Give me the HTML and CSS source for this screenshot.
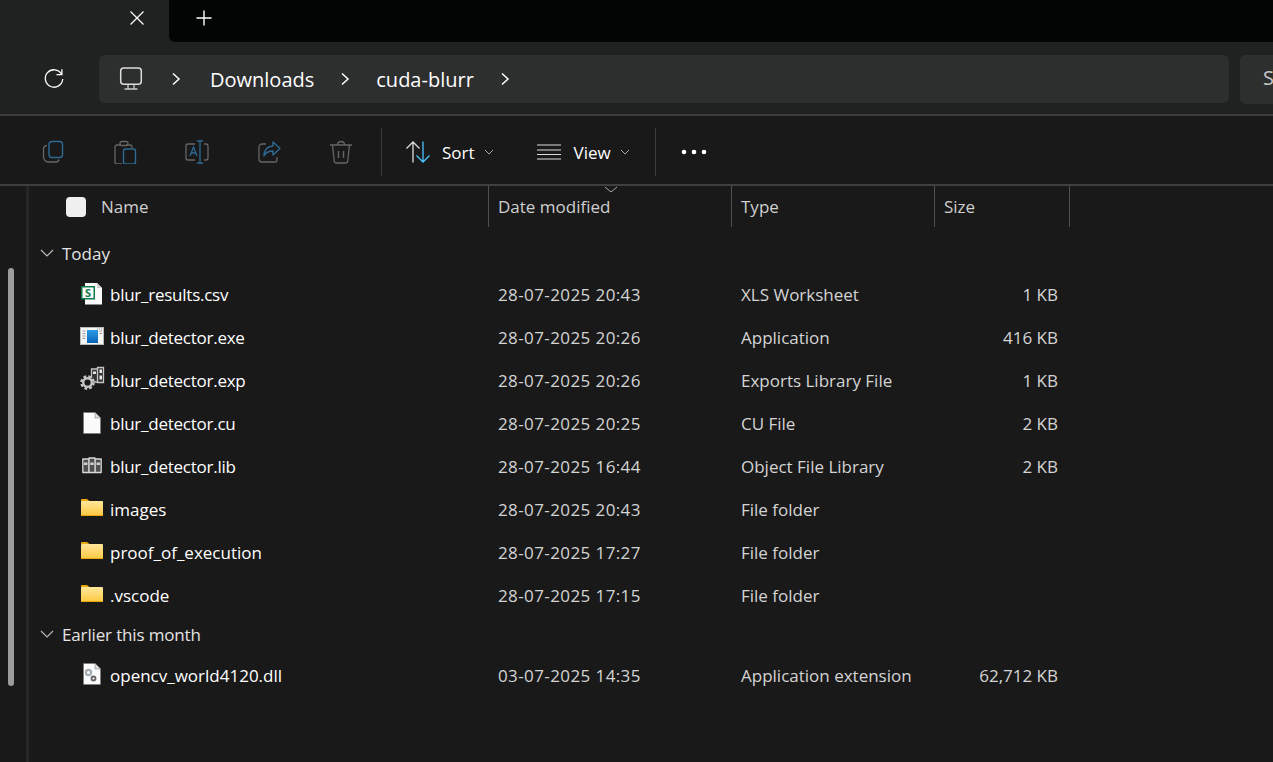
FILE: index.html
```html
<!DOCTYPE html>
<html lang="en">
<head>
    <meta charset="UTF-8">
    <meta name="viewport" content="width=device-width, initial-scale=1.0">
    <title>cuda-blurr - File Explorer</title>
    <link rel="stylesheet" href="styles.css">
</head>
<body>
    <div class="tabstrip">
        <div class="tab">
            <svg class="tab-close" width="16" height="16" viewBox="0 0 16 16"><path d="M1.5 1.500l13 13M14.500 1.500l-13 13" stroke="#fff" stroke-width="1.200" fill="none"/></svg>
        </div>
        <div class="tab-rest">
            <svg class="tab-new" width="18" height="18" viewBox="0 0 18 18"><path d="M9 1.500v15M1.500 9h15" stroke="#fff" stroke-width="1.400" fill="none"/></svg>
        </div>
    </div>

    <div class="addressbar">
        <svg class="refresh" width="22" height="22" viewBox="0 0 22 22"><path d="M18.600 6.200A8.700 8.700 0 1 0 19.700 11" stroke="#fff" stroke-width="1.300" fill="none"/><path d="M13.500 6.700h5.400V1.300" stroke="#fff" stroke-width="1.300" fill="none"/></svg>
        <div class="breadcrumb">
            <svg class="pc-icon" width="24" height="24" viewBox="0 0 24 24"><rect x="1.700" y="1" width="20.600" height="16.300" rx="3" stroke="#ddd" stroke-width="1.500" fill="none"/><path d="M9 17.500v4M15 17.500v4M5.500 22h13" stroke="#ccc" stroke-width="1.300" fill="none"/></svg>
            <svg class="crumb-sep" width="10" height="14" viewBox="0 0 10 14"><path d="M2 1.500L8 7l-6 5.500" stroke="#fff" stroke-width="1.500" fill="none"/></svg>
            <span class="crumb">Downloads</span>
            <svg class="crumb-sep" width="10" height="14" viewBox="0 0 10 14"><path d="M2 1.500L8 7l-6 5.500" stroke="#fff" stroke-width="1.500" fill="none"/></svg>
            <span class="crumb">cuda-blurr</span>
            <svg class="crumb-sep" width="10" height="14" viewBox="0 0 10 14"><path d="M2 1.500L8 7l-6 5.500" stroke="#fff" stroke-width="1.500" fill="none"/></svg>
        </div>
        <div class="searchbox">S</div>
    </div>

    <div class="toolbar">
        <div class="tool-group">
            <svg class="tool" width="24" height="24" viewBox="0 0 24 24"><path d="M6 5.500c-2 .3-3.500 1.500-3.500 3.500v8a5 5 0 0 0 5 5h7c2 0 3.200-1 3.500-2.500" stroke="#666" stroke-width="1.300" fill="none"/><rect x="8" y="1.500" width="13.500" height="16" rx="3" stroke="#2f6a94" stroke-width="1.400" fill="none"/></svg>
            <svg class="tool" width="24" height="24" viewBox="0 0 24 24"><path d="M8 5H4a2 2 0 0 0-2 2v15a2 2 0 0 0 2 2h5M19 8V7a2 2 0 0 0-2-2h-4" stroke="#666" stroke-width="1.300" fill="none"/><rect x="7" y="1.500" width="8" height="4" rx="1.500" stroke="#666" stroke-width="1.300" fill="none"/><rect x="10.500" y="9" width="12" height="15" rx="2" stroke="#2f6a94" stroke-width="1.400" fill="none"/></svg>
            <svg class="tool" width="24" height="24" viewBox="0 0 24 24"><path d="M10 4H3a2 2 0 0 0-2 2v12a2 2 0 0 0 2 2h7M19 4h2a2 2 0 0 1 2 2v12a2 2 0 0 1-2 2h-2" stroke="#666" stroke-width="1.300" fill="none"/><path d="M12 1h6M15 1v22M12 23h6" stroke="#2f6a94" stroke-width="1.300" fill="none"/><path d="M5 16l3.500-9L12 16M6.200 13h4.600" stroke="#2f6a94" stroke-width="1.300" fill="none"/></svg>
            <svg class="tool" width="24" height="24" viewBox="0 0 24 24"><path d="M9 4H5a3 3 0 0 0-3 3v12a3 3 0 0 0 3 3h13a2 2 0 0 0 2-2v-3" stroke="#666" stroke-width="1.300" fill="none"/><path d="M16 2l7 6.500-7 6.500v-4c-4 0-7 1-9 5 0-6 3-9.500 9-10z" stroke="#2f6a94" stroke-width="1.400" stroke-linejoin="round" fill="none"/></svg>
            <svg class="tool" width="24" height="24" viewBox="0 0 24 24"><path d="M1 5h22M8.500 5c0-2 1-3.500 3.500-3.500S15.500 3 15.500 5M3.500 5l1.700 15.500A2.500 2.500 0 0 0 7.700 23h8.600a2.500 2.500 0 0 0 2.500-2.500L20.500 5" stroke="#666" stroke-width="1.300" fill="none"/><path d="M9.500 11v7M14.500 11v7" stroke="#666" stroke-width="1.500" fill="none"/></svg>
        </div>
        <div class="tool-divider"></div>
        <div class="tool-menu sort-menu">
            <svg width="26" height="24" viewBox="0 0 26 24"><path d="M8 22.500V2M1.500 8.500L8 2l6.500 6.500" stroke="#ddd" stroke-width="1.300" fill="none"/><path d="M18 1.500V22M11.500 15.500L18 22l6.500-6.500" stroke="#4cc2ff" stroke-width="1.300" fill="none"/></svg>
            <span>Sort</span>
            <svg class="menu-caret" width="10" height="6" viewBox="0 0 10 6"><path d="M1 1l4 4 4-4" stroke="#aaa" stroke-width="1" fill="none"/></svg>
        </div>
        <div class="tool-menu view-menu">
            <svg width="24" height="16" viewBox="0 0 24 16"><path d="M0 1h24M0 6h24M0 10.500h24M0 15h24" stroke="#ddd" stroke-width="1.200" fill="none"/></svg>
            <span>View</span>
            <svg class="menu-caret" width="10" height="6" viewBox="0 0 10 6"><path d="M1 1l4 4 4-4" stroke="#aaa" stroke-width="1" fill="none"/></svg>
        </div>
        <div class="tool-divider"></div>
        <svg class="more" width="26" height="6" viewBox="0 0 26 6"><circle cx="3" cy="3" r="2.300" fill="#fff"/><circle cx="13" cy="3" r="2.300" fill="#fff"/><circle cx="23" cy="3" r="2.300" fill="#fff"/></svg>
    </div>

    <div class="content">
        <div class="navpane"><div class="scroll-thumb"></div></div>
        <div class="filelist">
            <div class="row header">
                <div class="col col-name"><span class="checkbox"></span>Name</div>
                <div class="col col-date">Date modified
                    <svg class="sort-arrow" width="14" height="7" viewBox="0 0 14 7"><path d="M1 1l6 5 6-5" stroke="#aaa" stroke-width="1" fill="none"/></svg>
                </div>
                <div class="col col-type">Type</div>
                <div class="col col-size">Size</div>
            </div>

            <div class="group first">
                <svg width="14" height="8" viewBox="0 0 14 8"><path d="M1 1l6 6 6-6" stroke="#bbb" stroke-width="1.100" fill="none"/></svg>
                <span>Today</span>
            </div>

            <div class="row file">
                <div class="cell-name tight">
                    <svg class="file-icon" width="24" height="24" viewBox="0 0 24 24"><path d="M5 0h12l5 5v16.500H5z" fill="#fafafa"/><path d="M17 0v5h5" fill="#d0d0d0"/><rect x="1" y="3" width="14" height="13.500" fill="#0f7b4d"/><rect x="2.500" y="4.500" width="11" height="10.500" fill="#fafafa"/><text x="8" y="13.500" class="sheet-letter">S</text></svg>
                    blur_results.csv
                </div>
                <div class="cell-date">28-07-2025 20:43</div><div>XLS Worksheet</div><div class="cell-size">1 KB</div>
            </div>
            <div class="row file">
                <div class="cell-name tight">
                    <svg class="file-icon" width="24" height="24" viewBox="0 0 24 24"><defs><linearGradient id="exe-fill" x1="0" y1="0" x2="0" y2="1"><stop offset="0" stop-color="#2b9be8"/><stop offset="1" stop-color="#0a63b4"/></linearGradient></defs><rect y="1" width="24" height="18" fill="#b8b8b8"/><rect x="1" y="2" width="22" height="16" fill="#f6f6f6"/><rect x="7" y="4" width="11" height="13" fill="url(#exe-fill)"/><path d="M2.500 5h3M2.500 7.500h3M2.500 10h3M2.500 12.500h3M19.500 5h2.500M19.500 7.500h2.500M17 3h1M19 3h1M21 3h1" stroke="#999" stroke-width="1"/></svg>
                    blur_detector.exe
                </div>
                <div class="cell-date">28-07-2025 20:26</div><div>Application</div><div class="cell-size">416 KB</div>
            </div>
            <div class="row file">
                <div class="cell-name tight">
                    <svg class="file-icon" width="24" height="24" viewBox="0 0 24 24"><path d="M11.500 0h6v13h-6zM17.500-1.500h6V13.500h-6z" stroke="#c4c4c4" fill="#333" stroke-width="1.300"/><path d="M13 2.500h3V5h-3zM19.500 .5h2.500v3.500h-2.500zM19.500 6.500h2.500v4h-2.500z" fill="#e8e8e8"/><circle cx="7.500" cy="13.500" r="6.100" stroke="#c4c4c4" stroke-width="2.400" stroke-dasharray="2.800 2" fill="#191919"/><circle cx="7.500" cy="13.500" r="4.300" stroke="#c4c4c4" stroke-width="2.400" fill="#191919"/></svg>
                    blur_detector.exp
                </div>
                <div class="cell-date">28-07-2025 20:26</div><div>Exports Library File</div><div class="cell-size">1 KB</div>
            </div>
            <div class="row file">
                <div class="cell-name tight">
                    <svg class="file-icon" width="24" height="24" viewBox="0 0 24 24"><path d="M3.500 .5h11.500l5.500 5.500v15.500H3.500z" fill="#fbfbfb" stroke="#777" stroke-width=".7"/><path d="M15 .5V6h5.500" fill="#ddd" stroke="#888" stroke-width=".6"/></svg>
                    blur_detector.cu
                </div>
                <div class="cell-date">28-07-2025 20:25</div><div>CU File</div><div class="cell-size">2 KB</div>
            </div>
            <div class="row file">
                <div class="cell-name tight">
                    <svg class="file-icon" width="24" height="24" viewBox="0 0 24 24"><path d="M2.800 4h6v13.500h-6zM9 3h6v14.500H9zM15.200 4h6v13.500h-6z" fill="#4f4f4f" stroke="#d8d8d8" stroke-width="1.300" stroke-linejoin="round"/><path d="M4 7.500h3.500v2.500H4zM10.300 7.500h3.400v2.500h-3.400zM16.500 7.500H20v2.500h-3.500z" fill="#cfcfcf"/></svg>
                    blur_detector.lib
                </div>
                <div class="cell-date">28-07-2025 16:44</div><div>Object File Library</div><div class="cell-size">2 KB</div>
            </div>
            <div class="row file">
                <div class="cell-name">
                    <svg class="file-icon" width="24" height="24" viewBox="0 0 24 24"><use href="#folder"/></svg>
                    images
                </div>
                <div class="cell-date">28-07-2025 20:43</div><div>File folder</div><div class="cell-size"></div>
            </div>
            <div class="row file">
                <div class="cell-name">
                    <svg class="file-icon" width="24" height="24" viewBox="0 0 24 24"><use href="#folder"/></svg>
                    proof_of_execution
                </div>
                <div class="cell-date">28-07-2025 17:27</div><div>File folder</div><div class="cell-size"></div>
            </div>
            <div class="row file">
                <div class="cell-name">
                    <svg class="file-icon" width="24" height="24" viewBox="0 0 24 24"><use href="#folder"/></svg>
                    .vscode
                </div>
                <div class="cell-date">28-07-2025 17:15</div><div>File folder</div><div class="cell-size"></div>
            </div>

            <div class="group later">
                <svg width="14" height="8" viewBox="0 0 14 8"><path d="M1 1l6 6 6-6" stroke="#bbb" stroke-width="1.100" fill="none"/></svg>
                <span>Earlier this month</span>
            </div>

            <div class="row file">
                <div class="cell-name">
                    <svg class="file-icon" width="24" height="24" viewBox="0 0 24 24"><path d="M3.500-.5h11.500l5.500 5.500v15.500H3.500z" fill="#fbfbfb" stroke="#777" stroke-width=".7"/><path d="M15-.5V5h5.500" fill="#ddd" stroke="#888" stroke-width=".6"/><circle cx="8.500" cy="8.500" r="2.600" stroke="#a3adb3" stroke-width="2.200" fill="none"/><circle cx="13.500" cy="14.500" r="2" stroke="#666" stroke-width="1.800" fill="none"/></svg>
                    opencv_world4120.dll
                </div>
                <div class="cell-date">03-07-2025 14:35</div><div>Application extension</div><div class="cell-size">62,712 KB</div>
            </div>
        </div>
    </div>

    <svg width="0" height="0" class="defs">
        <defs>
            <linearGradient id="folder-fill" x1="0" y1="0" x2="0" y2="1">
                <stop offset="0" stop-color="#ffe69a"/>
                <stop offset="1" stop-color="#fcc83f"/>
            </linearGradient>
            <g id="folder">
                <path d="M1 2a1 1 0 0 1 1-1h5l2.500 2H1z" fill="#e9a80c"/>
                <rect x="1" y="3" width="22" height="15" rx=".7" fill="url(#folder-fill)"/>
                <path d="M1 17.500h22" stroke="#e9a80c" stroke-width="1"/>
            </g>
        </defs>
    </svg>
</body>
</html>
```

FILE: styles.css
```css
* {
    box-sizing: border-box;
}
html, body {
    height: 100%;
}
body {
    margin: 0;
    background-color: #191919;
    color: #fff;
    font-family: "Open Sans", "Noto Sans", sans-serif;
    font-size: 17px;
    overflow: hidden;
}
svg {
    display: block;
    flex: none;
}
.defs {
    position: absolute;
}

/* tabs */
.tabstrip {
    display: flex;
    height: 42px;
    background-color: #202221;
}
.tab {
    display: flex;
    align-items: center;
    justify-content: flex-end;
    width: 169px;
    padding: 0 24px 6px 0;
}
.tab-rest {
    flex: 1;
    display: flex;
    align-items: center;
    padding: 0 0 6px 26px;
    background-color: #030404;
    border-bottom-left-radius: 6px;
}

/* address bar */
.addressbar {
    display: flex;
    align-items: center;
    height: 72px;
    padding: 13px 0 11px 43px;
    background-color: #202221;
}
.refresh {
    margin-right: 34px;
}
.breadcrumb {
    flex: none;
    display: flex;
    align-items: center;
    width: 1130px;
    height: 48px;
    padding-left: 20px;
    background-color: #2d2e2e;
    border-radius: 6px;
    font-size: 20px;
}
.pc-icon {
    margin-right: 28px;
}
.crumb {
    margin: 0 26px;
}
.crumb:first-of-type {
    margin-left: 29px;
}
.searchbox {
    flex: 1;
    min-width: 0;
    height: 49px;
    margin-left: 11px;
    padding: 9px 0 0 23px;
    overflow: hidden;
    background-color: #2d2e2e;
    border-radius: 6px 0 0 6px;
    font-size: 20px;
    color: #c8c8c8;
}

/* command bar */
.toolbar {
    display: flex;
    align-items: center;
    height: 72px;
    padding: 4px 0 0 41px;
    background-color: #191919;
    border-top: 2px solid #3e3e3e;
    border-bottom: 2px solid #3e3e3e;
}
.tool-group {
    display: flex;
    gap: 48px;
    align-items: center;
}
.tool-divider {
    width: 1px;
    height: 48px;
    background-color: #3c3c3c;
}
.tool-group + .tool-divider {
    margin-left: 28px;
}
.tool-menu {
    display: flex;
    align-items: center;
    font-size: 17px;
}
.sort-menu {
    margin-left: 23px;
}
.sort-menu span {
    margin: 0 9px 0 11px;
}
.view-menu {
    margin-left: 43px;
}
.view-menu span {
    margin: 0 9px 0 13px;
}
.view-menu + .tool-divider {
    margin-left: 25px;
}
.more {
    margin-left: 25px;
}

/* file list */
.content {
    display: flex;
    height: 576px;
}
.navpane {
    width: 29px;
    padding: 82px 0 0 8px;
    border-right: 3px solid #262626;
}
.scroll-thumb {
    width: 6px;
    height: 418px;
    background-color: #9c9c9c;
    border-radius: 3px;
}
.filelist {
    flex: 1;
}
.row {
    display: grid;
    grid-template-columns: 460px 243px 203px 135px;
    align-items: center;
    height: 43px;
    color: #d4d4d4;
}
.row.header {
    height: 41px;
    color: #cfcfcf;
}
.col {
    position: relative;
    display: flex;
    align-items: center;
    height: 41px;
    padding-left: 9px;
    border-right: 1px solid #505050;
}
.col-name {
    padding-left: 37px;
}
.checkbox {
    width: 20px;
    height: 20px;
    margin-right: 15px;
    background-color: #efefef;
    border-radius: 4px;
}
.sort-arrow {
    position: absolute;
    top: 0;
    left: 115px;
}
.group {
    display: flex;
    align-items: center;
    gap: 8px;
    height: 38px;
    padding: 0 0 2px 11px;
    color: #e4e4e4;
}
.group.first {
    margin-top: 8px;
}
.group.later {
    margin-top: -1px;
    letter-spacing: -.15px;
}
.file > div {
    padding-left: 9px;
}
.file .cell-name {
    display: flex;
    align-items: center;
    gap: 6px;
    padding-left: 51px;
    color: #fff;
}
.file .cell-name.tight {
    letter-spacing: -.25px;
}
.file .cell-date {
    letter-spacing: .4px;
}
.file .cell-size {
    padding-right: 12px;
    text-align: right;
}
.file-icon {
    overflow: visible;
}
.sheet-letter {
    fill: #0f7b4d;
    font-family: "Open Sans", sans-serif;
    font-size: 11px;
    font-weight: 700;
    text-anchor: middle;
}
```
